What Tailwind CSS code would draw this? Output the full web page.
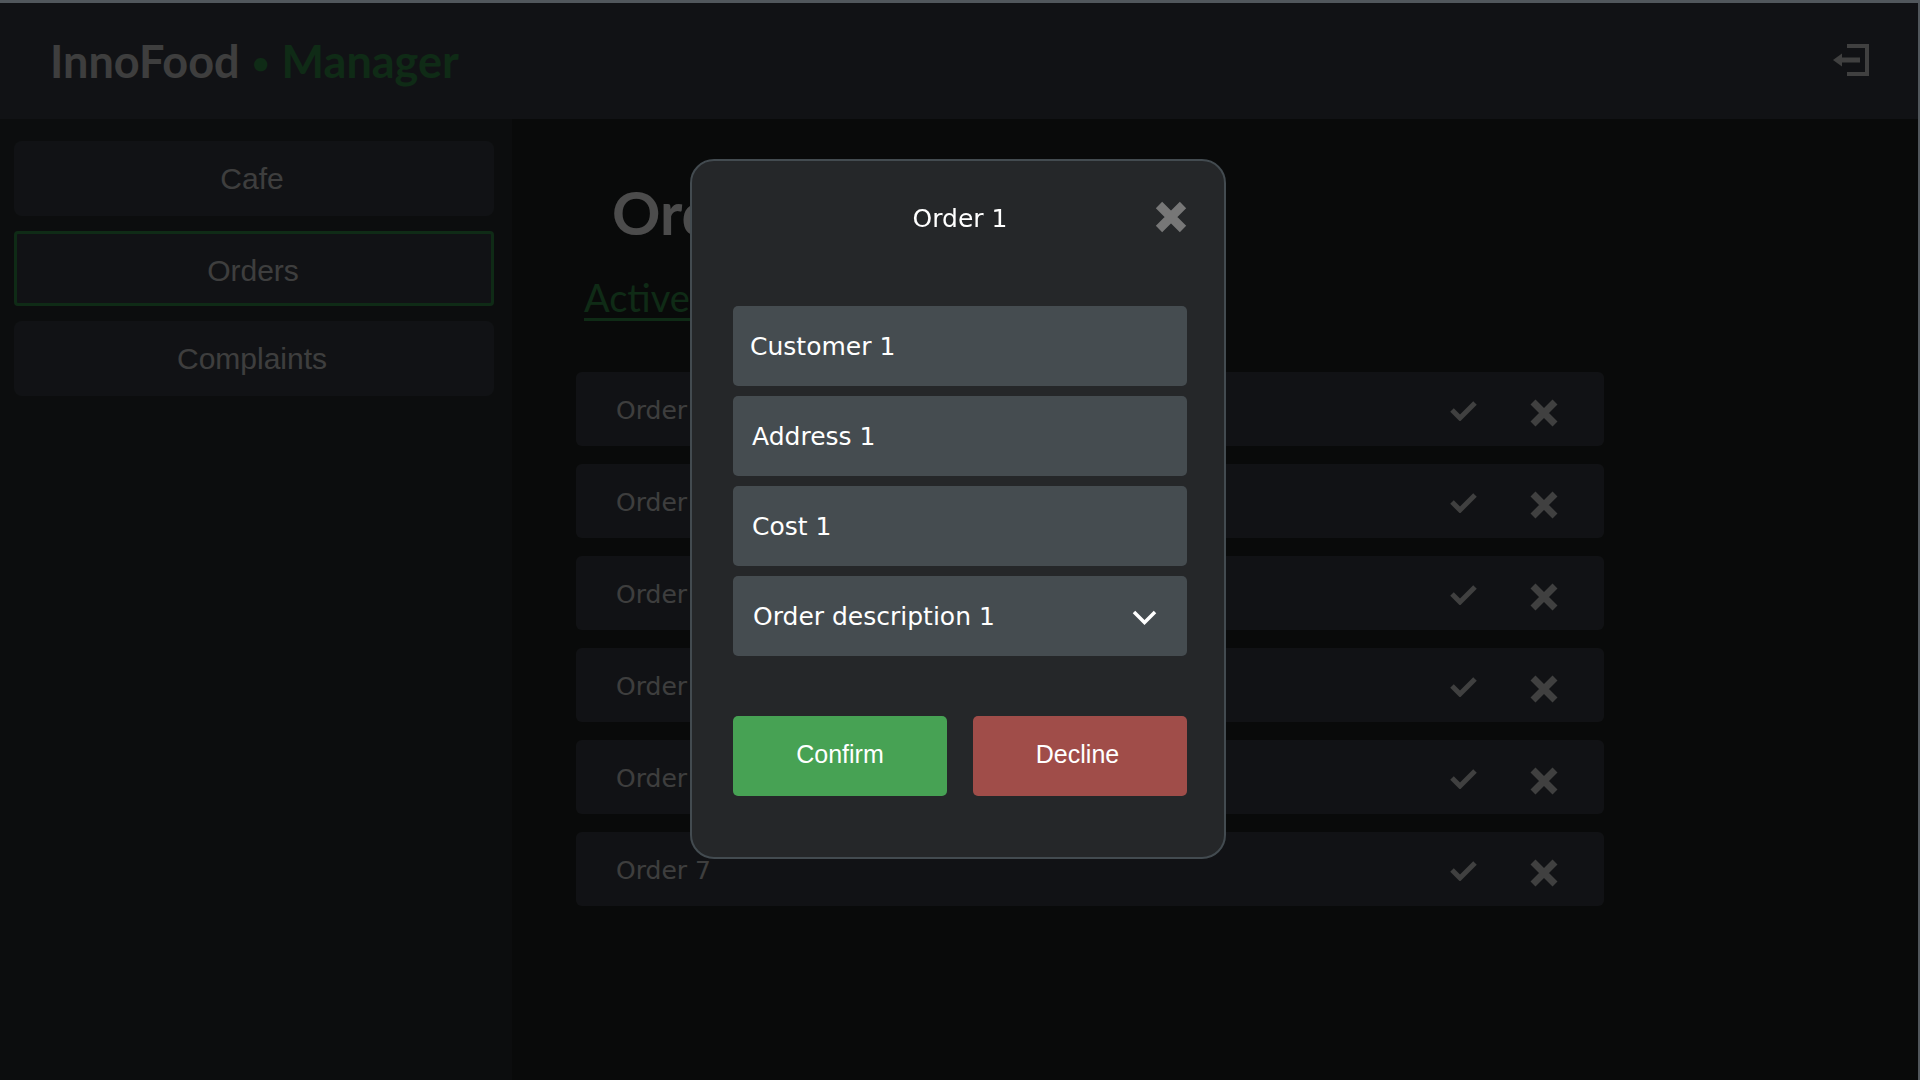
<!DOCTYPE html>
<html lang="en">
<head>
    <meta charset="UTF-8" />
    <title>InnoFood Manager</title>
    <script src="https://cdn.jsdelivr.net/npm/@tailwindcss/browser@4"></script>
</head>
<body class="h-screen overflow-hidden bg-[#212424] border-t-[3px] border-r-2 border-[#51575c] font-['DejaVu_Sans',sans-serif]">
    <header class="h-[116px] bg-[#393f46] flex items-center justify-between pl-[50px] pr-[49px]">
        <h1 class="text-[45px] font-bold font-['Lato',sans-serif] text-[#d0d0d0] leading-none">InnoFood<span class="inline-block w-[42px] text-center text-[30px] text-[#35904a] align-[4px]">•</span><span class="text-[#35904a]">Manager</span></h1>
        <svg class="w-[36px] h-[32px] mb-[3px]" viewBox="0 0 36 32" fill="none">
            <path d="M14 2h20v28H14" stroke="#d5d5d5" stroke-width="4"/>
            <path d="M27 16H7" stroke="#d5d5d5" stroke-width="5"/>
            <path d="M0 16l9-6.500v13z" fill="#d5d5d5"/>
        </svg>
    </header>
    <div class="flex h-[961px]">
        <aside class="w-[512px] bg-[#2a2e31] pt-[22px] pl-[14px] pr-[18px] flex flex-col gap-[15px] text-[30px] text-[#d0d0d0] font-['Liberation_Sans',sans-serif]">
            <a class="h-[75px] rounded-lg bg-[#393f46] flex items-center justify-center pb-[1px] pr-[4px]">Cafe</a>
            <a class="h-[75px] rounded-[4px] bg-[#393f46] border-[3px] border-[#35904a] flex items-center justify-center pt-[3px] pr-[2px]">Orders</a>
            <a class="h-[75px] rounded-lg bg-[#393f46] flex items-center justify-center pb-[1px] pr-[4px]">Complaints</a>
        </aside>
        <main class="flex-1 pt-[63px] pl-[64px] font-['Lato',sans-serif]">
            <h2 class="text-[60px] font-bold text-[#fff] leading-none ml-[36px]">Orders</h2>
            <div class="mt-[36px] ml-[8px] text-[38px] text-[#35904a] underline underline-offset-[6px] leading-none">Active orders</div>
            <div id="rows" class="mt-[56px] w-[1028px] flex flex-col gap-[18px] font-['DejaVu_Sans',sans-serif]">
                <div class="h-[74px] rounded-md bg-[#393f46] flex items-center pl-[40px] pr-[46px] text-[25px] text-[#d0d0d0]">
                    <span class="flex-1 pt-[4px]">Order 2</span>
                    <svg class="w-[27px] h-[21px] mr-[53px] mt-[3px]" viewBox="0 0 27 21" fill="none"><path d="M2 10l8 8L25 3" stroke="#d5d5d5" stroke-width="5"/></svg>
                    <svg class="w-[28px] h-[28px] mt-[8px]" viewBox="0 0 28 28" fill="none"><path d="M3 3l22 22M25 3L3 25" stroke="#d5d5d5" stroke-width="7"/></svg>
                </div>
                <div class="h-[74px] rounded-md bg-[#393f46] flex items-center pl-[40px] pr-[46px] text-[25px] text-[#d0d0d0]">
                    <span class="flex-1 pt-[4px]">Order 3</span>
                    <svg class="w-[27px] h-[21px] mr-[53px] mt-[3px]" viewBox="0 0 27 21" fill="none"><path d="M2 10l8 8L25 3" stroke="#d5d5d5" stroke-width="5"/></svg>
                    <svg class="w-[28px] h-[28px] mt-[8px]" viewBox="0 0 28 28" fill="none"><path d="M3 3l22 22M25 3L3 25" stroke="#d5d5d5" stroke-width="7"/></svg>
                </div>
                <div class="h-[74px] rounded-md bg-[#393f46] flex items-center pl-[40px] pr-[46px] text-[25px] text-[#d0d0d0]">
                    <span class="flex-1 pt-[4px]">Order 4</span>
                    <svg class="w-[27px] h-[21px] mr-[53px] mt-[3px]" viewBox="0 0 27 21" fill="none"><path d="M2 10l8 8L25 3" stroke="#d5d5d5" stroke-width="5"/></svg>
                    <svg class="w-[28px] h-[28px] mt-[8px]" viewBox="0 0 28 28" fill="none"><path d="M3 3l22 22M25 3L3 25" stroke="#d5d5d5" stroke-width="7"/></svg>
                </div>
                <div class="h-[74px] rounded-md bg-[#393f46] flex items-center pl-[40px] pr-[46px] text-[25px] text-[#d0d0d0]">
                    <span class="flex-1 pt-[4px]">Order 5</span>
                    <svg class="w-[27px] h-[21px] mr-[53px] mt-[3px]" viewBox="0 0 27 21" fill="none"><path d="M2 10l8 8L25 3" stroke="#d5d5d5" stroke-width="5"/></svg>
                    <svg class="w-[28px] h-[28px] mt-[8px]" viewBox="0 0 28 28" fill="none"><path d="M3 3l22 22M25 3L3 25" stroke="#d5d5d5" stroke-width="7"/></svg>
                </div>
                <div class="h-[74px] rounded-md bg-[#393f46] flex items-center pl-[40px] pr-[46px] text-[25px] text-[#d0d0d0]">
                    <span class="flex-1 pt-[4px]">Order 6</span>
                    <svg class="w-[27px] h-[21px] mr-[53px] mt-[3px]" viewBox="0 0 27 21" fill="none"><path d="M2 10l8 8L25 3" stroke="#d5d5d5" stroke-width="5"/></svg>
                    <svg class="w-[28px] h-[28px] mt-[8px]" viewBox="0 0 28 28" fill="none"><path d="M3 3l22 22M25 3L3 25" stroke="#d5d5d5" stroke-width="7"/></svg>
                </div>
                <div class="h-[74px] rounded-md bg-[#393f46] flex items-center pl-[40px] pr-[46px] text-[25px] text-[#d0d0d0]">
                    <span class="flex-1 pt-[4px]">Order 7</span>
                    <svg class="w-[27px] h-[21px] mr-[53px] mt-[3px]" viewBox="0 0 27 21" fill="none"><path d="M2 10l8 8L25 3" stroke="#d5d5d5" stroke-width="5"/></svg>
                    <svg class="w-[28px] h-[28px] mt-[8px]" viewBox="0 0 28 28" fill="none"><path d="M3 3l22 22M25 3L3 25" stroke="#d5d5d5" stroke-width="7"/></svg>
                </div>
            </div>
        </main>
    </div>

    <!-- modal -->
    <div class="fixed left-0 right-[2px] bottom-0 top-[3px] bg-black/70"></div>
    <div class="fixed left-[690px] top-[159px] w-[536px] h-[700px] rounded-[24px] border-2 border-[#434b50] bg-[#252729] pl-[41px] pr-[37px]">
        <div class="relative h-[145px] pt-[40px] text-center text-[25px] leading-[36px] text-white">
            Order 1
            <svg class="absolute right-0 top-[40px] w-[32px] h-[32px]" viewBox="0 0 32 32" fill="none"><path d="M4 4l24 24M28 4L4 28" stroke="#777" stroke-width="9"/></svg>
        </div>
        <div class="flex flex-col gap-[10px] text-[25px] text-white">
            <div class="h-[80px] rounded-[5px] bg-[#454c50] flex items-center pl-[17px] pt-[2px]">Customer 1</div>
            <div class="h-[80px] rounded-[5px] bg-[#454c50] flex items-center pl-[19px] pt-[2px]">Address 1</div>
            <div class="h-[80px] rounded-[5px] bg-[#454c50] flex items-center pl-[19px] pt-[2px]">Cost 1</div>
            <div class="h-[80px] rounded-[5px] bg-[#454c50] flex items-center justify-between pl-[20px] pr-[30px] pt-[2px]">
                Order description 1
                <svg class="w-[25px] h-[16px]" viewBox="0 0 25 16" fill="none"><path d="M2 3l10.500 10.500L23 3" stroke="#fff" stroke-width="3.500"/></svg>
            </div>
        </div>
        <div class="mt-[60px] flex justify-between text-[25px] text-white font-['Liberation_Sans',sans-serif]">
            <button class="w-[214px] h-[80px] rounded-[5px] bg-[#47a254] pb-[2px]">Confirm</button>
            <button class="w-[214px] h-[80px] rounded-[5px] bg-[#a04d49] pb-[2px] pr-[5px]">Decline</button>
        </div>
    </div>
</body>
</html>
